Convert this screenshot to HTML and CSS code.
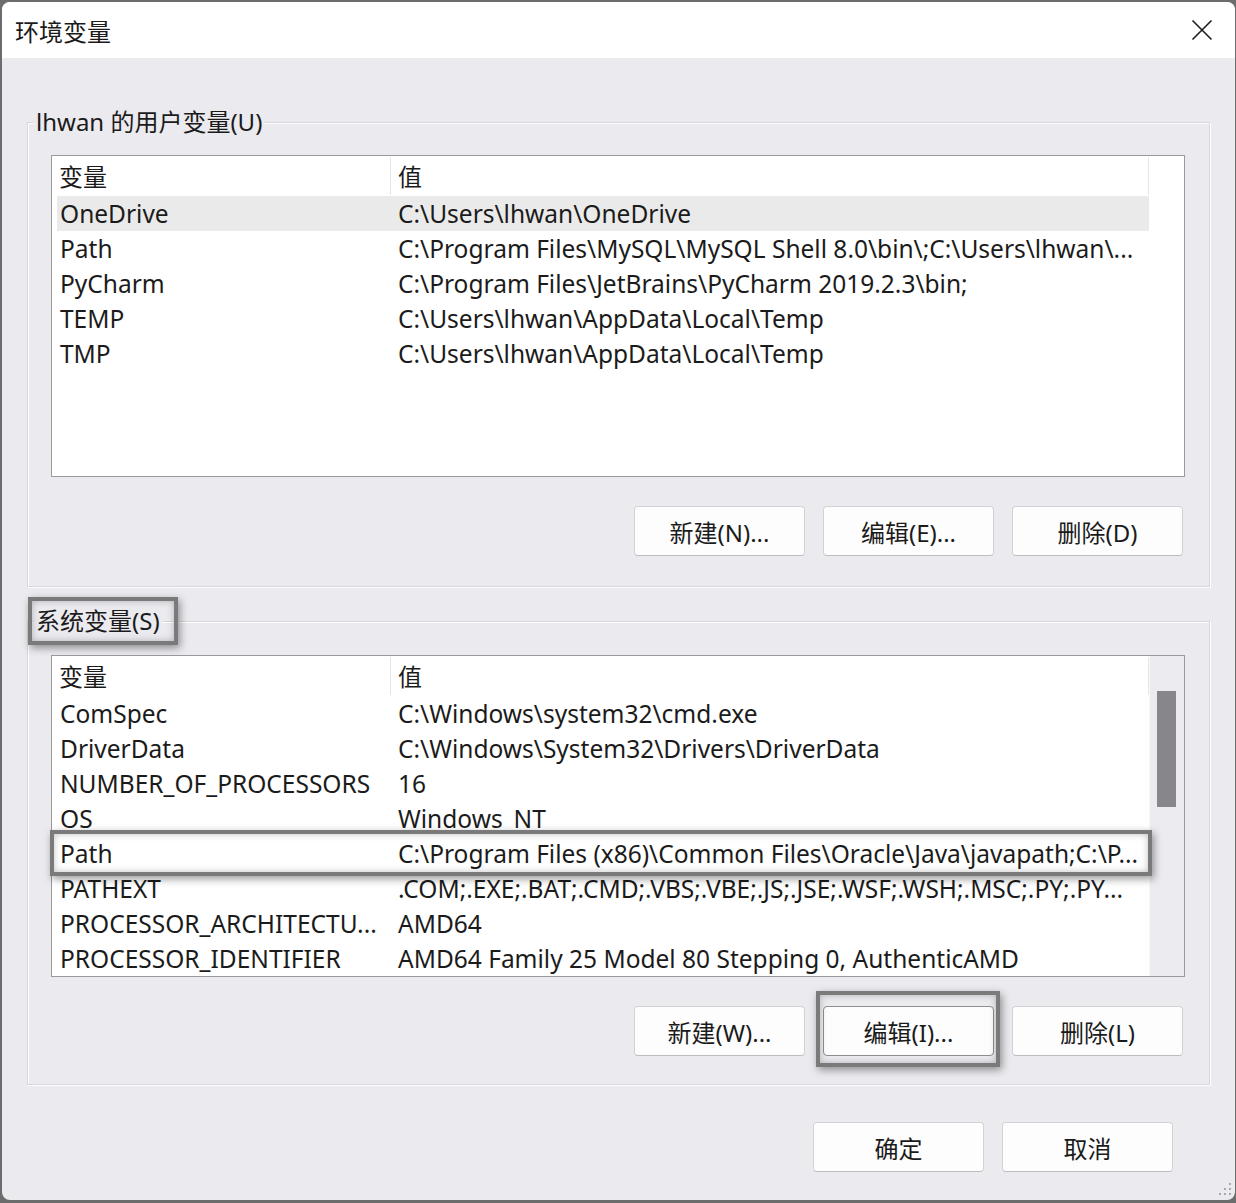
FILE: index.html
```html
<!DOCTYPE html>
<html lang="zh-CN">
<head>
  <meta charset="UTF-8" />
  <meta name="viewport" content="width=device-width, initial-scale=1.0" />
  <title>环境变量</title>
  <link rel="stylesheet" href="styles.css">
</head>
<body>
  <div class="window">
    <!-- Title bar -->
    <div class="titlebar">
      <span class="title">环境变量</span>
      <span class="close">
        <svg width="22" height="22" viewBox="0 0 22 22"><path d="M1.5 1.5 L20.5 20.5 M20.5 1.5 L1.5 20.5" stroke="#1c1c1c" stroke-width="1.6" fill="none"/></svg>
      </span>
    </div>

    <div class="content">
      <!-- User variables -->
      <fieldset class="group">
        <legend>lhwan 的用户变量(U)</legend>
        <div class="list">
          <div class="rows">
            <div class="row head"><span class="c1">变量</span><span class="c2">值</span></div>
            <div class="row selected"><span class="c1">OneDrive</span><span class="c2">C:\Users\lhwan\OneDrive</span></div>
            <div class="row"><span class="c1">Path</span><span class="c2">C:\Program Files\MySQL\MySQL Shell 8.0\bin\;C:\Users\lhwan\...</span></div>
            <div class="row"><span class="c1">PyCharm</span><span class="c2">C:\Program Files\JetBrains\PyCharm 2019.2.3\bin;</span></div>
            <div class="row"><span class="c1">TEMP</span><span class="c2">C:\Users\lhwan\AppData\Local\Temp</span></div>
            <div class="row"><span class="c1">TMP</span><span class="c2">C:\Users\lhwan\AppData\Local\Temp</span></div>
          </div>
          <div class="side"></div>
        </div>
        <div class="actions">
          <button class="btn">新建(N)...</button>
          <button class="btn">编辑(E)...</button>
          <button class="btn">删除(D)</button>
        </div>
      </fieldset>

      <!-- System variables -->
      <fieldset class="group system">
        <legend class="marked">系统变量(S)</legend>
        <div class="list">
          <div class="rows">
            <div class="row head"><span class="c1">变量</span><span class="c2">值</span></div>
            <div class="row"><span class="c1">ComSpec</span><span class="c2">C:\Windows\system32\cmd.exe</span></div>
            <div class="row"><span class="c1">DriverData</span><span class="c2">C:\Windows\System32\Drivers\DriverData</span></div>
            <div class="row"><span class="c1">NUMBER_OF_PROCESSORS</span><span class="c2">16</span></div>
            <div class="row"><span class="c1">OS</span><span class="c2">Windows_NT</span></div>
            <div class="row marked"><span class="c1">Path</span><span class="c2">C:\Program Files (x86)\Common Files\Oracle\Java\javapath;C:\P...</span></div>
            <div class="row"><span class="c1">PATHEXT</span><span class="c2">.COM;.EXE;.BAT;.CMD;.VBS;.VBE;.JS;.JSE;.WSF;.WSH;.MSC;.PY;.PY...</span></div>
            <div class="row"><span class="c1">PROCESSOR_ARCHITECTU...</span><span class="c2">AMD64</span></div>
            <div class="row"><span class="c1">PROCESSOR_IDENTIFIER</span><span class="c2">AMD64 Family 25 Model 80 Stepping 0, AuthenticAMD</span></div>
          </div>
          <div class="side scroll"><div class="thumb"></div></div>
        </div>
        <div class="actions">
          <button class="btn">新建(W)...</button>
          <span class="marked-btn"><button class="btn focus">编辑(I)...</button></span>
          <button class="btn">删除(L)</button>
        </div>
      </fieldset>

      <div class="footer">
        <button class="btn">确定</button>
        <button class="btn">取消</button>
      </div>
    </div>

    <svg class="grip" width="16" height="16" viewBox="0 0 16 16">
      <rect x="13" y="1" width="2" height="2" fill="#a8a8ac"/>
      <rect x="8" y="6" width="2" height="2" fill="#a8a8ac"/>
      <rect x="13" y="6" width="2" height="2" fill="#a8a8ac"/>
      <rect x="3" y="11" width="2" height="2" fill="#a8a8ac"/>
      <rect x="8" y="11" width="2" height="2" fill="#a8a8ac"/>
      <rect x="13" y="11" width="2" height="2" fill="#a8a8ac"/>
    </svg>
  </div>
</body>
</html>
```

FILE: styles.css
```css
:root {
  --bg: #ebeaef;
  --text: #1b1b1b;
  --line: #d7d6db;
  --list-border: #9a9a9a;
  --mark: #7a7a7a;
}

*,
*::before,
*::after {
  box-sizing: border-box;
}

body {
  margin: 0;
  background: #6c6c6c;
  font-family: "Noto Sans", "Noto Sans CJK SC", sans-serif;
  color: var(--text);
}

.window {
  position: relative;
  width: 1233px;
  height: 1198px;
  margin: 2px 0 0 2px;
  background: var(--bg);
  border-radius: 8px;
  overflow: hidden;
}

.titlebar {
  height: 56px;
  background: #fff;
  display: flex;
  align-items: center;
  justify-content: space-between;
  padding: 0 22px 0 13px;
}

.title {
  font-size: 24px;
}

.close {
  display: flex;
}

.content {
  padding: 0 25px;
}

/* group boxes */
.group {
  margin: 49px 0 0;
  min-width: 0;
  padding: 18px 24px 30px 23px;
  border: 1px solid var(--line);
  box-shadow: inset 1px 1px 0 #fff, 1px 1px 0 #fff;
}

.group.system {
  margin-top: 19px;
  padding-top: 19px;
  padding-bottom: 28px;
}

legend {
  margin-left: -17px;
  padding: 0 2px;
  font-size: 24px;
  line-height: 30px;
  background: var(--bg);
}

/* list view */
.list {
  display: grid;
  grid-template-columns: 1fr 35px;
  height: 322px;
  border: 1px solid var(--list-border);
  background: #fff;
}

.rows {
  padding-left: 5px;
  min-width: 0;
}

.row {
  display: grid;
  grid-template-columns: 334px 1fr;
  height: 35px;
  align-items: center;
  font-size: 24.5px;
  white-space: nowrap;
}

.row span {
  overflow: hidden;
}

.row .c1 {
  padding-left: 3px;
}

.row .c2 {
  padding-left: 7px;
}

.row.head {
  height: 40px;
  align-items: stretch;
  font-size: 24px;
}

.row.head span {
  display: flex;
  align-items: center;
  padding-bottom: 2px;
  border-right: 1px solid #e6e6e8;
  margin: 1px 0 1px;
}

.row.head .c1 {
  padding-left: 2px;
}

.row.selected {
  background: #eaeaea;
}

.side.scroll {
  background: #ececf0;
  border-left: 1px solid #f8f8fa;
  padding: 35px 8px 0 7px;
}

.thumb {
  height: 116px;
  background: #87868b;
}

/* buttons */
.actions {
  display: flex;
  justify-content: flex-end;
  gap: 18px;
  margin-top: 29px;
  padding-right: 2px;
}

.btn {
  width: 171px;
  height: 50px;
  border: 1px solid #d2d2d4;
  border-bottom-color: #bdbdc0;
  border-radius: 4px;
  background: #fdfdfd;
  font-family: "Noto Sans", "Noto Sans CJK SC", sans-serif;
  font-size: 24px;
  color: var(--text);
  padding: 0;
}

.btn.focus {
  border-color: #8e8e90;
}

.footer {
  display: flex;
  justify-content: flex-end;
  gap: 18px;
  margin: 37px 37px 0 0;
}

/* annotation frames */
.marked,
.marked-btn {
  position: relative;
}

.marked-btn {
  display: flex;
}

.marked::after,
.marked-btn::after {
  content: "";
  position: absolute;
  border: 4px solid var(--mark);
  box-shadow: 2px 3px 8px rgba(0, 0, 0, 0.4), inset 0 0 7px rgba(0, 0, 0, 0.25);
  pointer-events: none;
}

legend.marked::after {
  left: -6px;
  top: -9px;
  width: 150px;
  height: 48px;
}

.row.marked::after {
  left: -7px;
  right: -3px;
  top: -6px;
  bottom: -5px;
}

.marked-btn::after {
  left: -7px;
  right: -6px;
  top: -15px;
  bottom: -11px;
}

.grip {
  position: absolute;
  right: 3px;
  bottom: 2px;
}
```
